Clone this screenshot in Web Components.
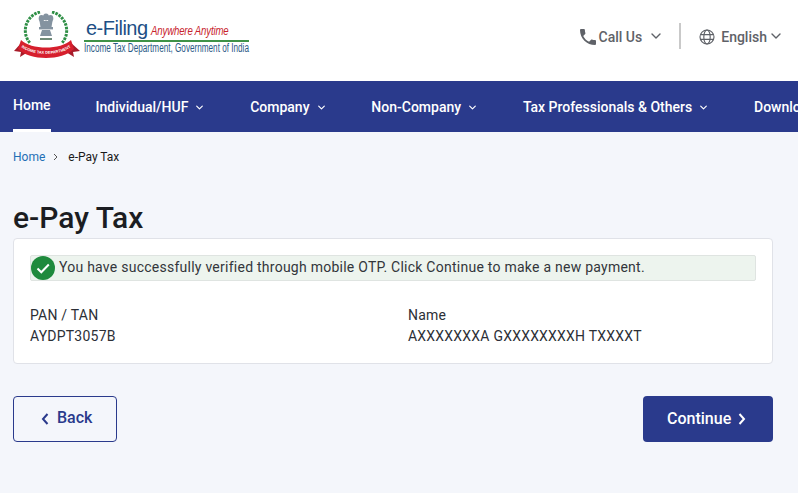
<!DOCTYPE html>
<html lang="en">
<head>
  <meta charset="UTF-8">
  <title>e-Pay Tax</title>
  <style>
    html, body {
      margin: 0;
      height: 100%;
      overflow: hidden;
      background: #f4f6fb;
      font-family: Roboto, "Liberation Sans", sans-serif;
    }
  </style>
</head>
<body>
  <app-header></app-header>
  <main-nav>
    <nav-item active>Home</nav-item>
    <nav-item menu>Individual/HUF</nav-item>
    <nav-item menu>Company</nav-item>
    <nav-item menu>Non-Company</nav-item>
    <nav-item menu>Tax Professionals &amp; Others</nav-item>
    <nav-item>Downloads</nav-item>
  </main-nav>
  <bread-crumb current="e-Pay Tax">Home</bread-crumb>
  <page-title>e-Pay Tax</page-title>
  <pay-card>
    <success-alert>You have successfully verified through mobile OTP. Click Continue to make a new payment.</success-alert>
    <info-field label="PAN / TAN">AYDPT3057B</info-field>
    <info-field label="Name">AXXXXXXXA GXXXXXXXXH TXXXXT</info-field>
  </pay-card>
  <action-bar>
    <action-button kind="back">Back</action-button>
    <action-button kind="next">Continue</action-button>
  </action-bar>

<script type="module">
  const chevron = `<svg viewBox="0 0 10 6" fill="none" stroke="currentColor" stroke-linecap="round" stroke-linejoin="round"><path d="M1 1l4 4 4-4"/></svg>`;

  class efilingLogo extends HTMLElement {
    constructor() {
      super();
      this.attachShadow({mode: "open"});
      this.shadowRoot.innerHTML = `
        <style>
          :host {
            display: flex;
            align-items: flex-start;
            width: 236px;
            height: 48px;
          }
          svg {
            flex: none;
            width: 68px;
            height: 48px;
            margin-right: 3px;
          }
          .words {
            display: flex;
            flex-direction: column;
            padding-top: 6px;
          }
          .top {
            display: flex;
            align-items: baseline;
            height: 23px;
            white-space: nowrap;
            padding-left: 2px;
            font-family: "Liberation Sans", sans-serif;
          }
          .brand {
            font-size: 20px;
            letter-spacing: -0.5px;
            color: #1d4f85;
          }
          .tag {
            display: inline-block;
            font-size: 13px;
            font-style: italic;
            letter-spacing: -0.2px;
            color: #c8232c;
            margin-left: 3px;
            transform: scaleX(0.74);
            transform-origin: left;
          }
          .rule {
            height: 2px;
            width: 165px;
            background: #3f9247;
          }
          .dept {
            margin-top: -1px;
            line-height: 14px;
            white-space: nowrap;
            font-family: "Liberation Sans", sans-serif;
            font-size: 12px;
            color: #2b5a86;
            transform: scaleX(0.68);
            transform-origin: left;
          }
        </style>
        <svg viewBox="0 0 68 48">
          <g fill="none" stroke="#2f8f46" stroke-width="3" stroke-dasharray="2.6 1">
            <path d="M27 1A19 19 0 0 0 17 32"/>
            <path d="M39 1A19 19 0 0 1 49 32"/>
          </g>
          <g fill="#8493a0">
            <ellipse cx="33" cy="6" rx="3" ry="3.600"/>
            <ellipse cx="28.500" cy="7.500" rx="2.800" ry="3.400"/>
            <ellipse cx="37.500" cy="7.500" rx="2.800" ry="3.400"/>
            <path d="M26.500 10h13l-1 6h-11z"/>
            <rect x="26" y="16" width="14" height="2.400"/>
            <path d="M29 19h8l2 6H27z"/>
          </g>
          <rect x="27" y="27" width="12" height="2" fill="#6f8a78"/>
          <path d="M9 31L1 40l7 1-1 5 8-5z" fill="#a81c2a"/>
          <path d="M57 31l10 9-7 1 1 5-8-5z" fill="#a81c2a"/>
          <path d="M8 29c10 10 40 10 50 0l3 9c-12 12-44 12-56 0z" fill="#d61f2d"/>
          <path id="ribbon" d="M7 35C17 45.500 49 45.500 59 35" fill="none"/>
          <text font-family="Liberation Sans, sans-serif" font-size="3.900" font-weight="700" fill="#fff">
            <textPath href="#ribbon" startOffset="50%" text-anchor="middle">INCOME TAX DEPARTMENT</textPath>
          </text>
        </svg>
        <div class="words">
          <div class="top"><span class="brand">e-Filing</span><span class="tag">Anywhere Anytime</span></div>
          <div class="rule"></div>
          <div class="dept">Income Tax Department, Government of India</div>
        </div>
      `;
    }
  }

  class topAction extends HTMLElement {
    constructor() {
      super();
      this.attachShadow({mode: "open"});
      this.shadowRoot.innerHTML = `
        <style>
          :host {
            display: inline-flex;
            align-items: center;
            font-size: 14px;
            font-weight: 500;
            color: #5f6268;
          }
          ::slotted(svg) {
            width: 16px;
            height: 16px;
          }
          .chev {
            display: inline-flex;
            margin: -2px 0 0 var(--chev-gap, 9px);
            width: 10px;
            height: 6px;
            stroke-width: 1.400;
          }
        </style>
        <slot name="icon"></slot>
        <slot></slot>
        <span class="chev">${chevron}</span>
      `;
    }
  }

  class appHeader extends HTMLElement {
    constructor() {
      super();
      this.attachShadow({mode: "open"});
      this.shadowRoot.innerHTML = `
        <style>
          :host {
            display: flex;
            justify-content: space-between;
            align-items: center;
            height: 81px;
            box-sizing: border-box;
            padding: 0 17px 0 13px;
            background: #fff;
          }
          efiling-logo {
            margin-top: -11px;
          }
          .right {
            display: flex;
            align-items: center;
            margin-top: -8px;
          }
          .divider {
            width: 2px;
            height: 26px;
            margin: -2px 18px 0 18px;
            background: #c9c9c9;
          }
          .phone {
            margin-right: 3px;
          }
          .lang {
            --chev-gap: 4px;
          }
          .globe {
            margin-right: 6px;
          }
        </style>
        <efiling-logo></efiling-logo>
        <div class="right">
          <top-action>
            <svg class="phone" slot="icon" viewBox="3 3 18 18" fill="#5f6268"><path d="M6.620 10.790c1.440 2.830 3.760 5.140 6.590 6.590l2.200-2.200c.27-.27.67-.36 1.020-.24 1.120.37 2.330.57 3.570.57.55 0 1 .45 1 1V20c0 .55-.45 1-1 1-9.390 0-17-7.610-17-17 0-.55.45-1 1-1h3.500c.55 0 1 .45 1 1 0 1.250.2 2.450.57 3.570.11.35.03.74-.25 1.020l-2.200 2.200z"/></svg>
            Call Us
          </top-action>
          <div class="divider"></div>
          <top-action class="lang">
            <svg class="globe" slot="icon" viewBox="0 0 24 24" fill="none" stroke="#5f6268" stroke-width="1.700"><circle cx="12" cy="12" r="10.500"/><ellipse cx="12" cy="12" rx="4.800" ry="10.500"/><path d="M2.500 8.500h19M2.500 15.500h19"/></svg>
            English
          </top-action>
        </div>
      `;
    }
  }

  class mainNav extends HTMLElement {
    constructor() {
      super();
      this.attachShadow({mode: "open"});
      this.shadowRoot.innerHTML = `
        <style>
          :host {
            display: flex;
            gap: 46.8px;
            height: 51px;
            padding-left: 13px;
            overflow: hidden;
            background: #2a3a8c;
          }
        </style>
        <slot></slot>
      `;
    }
  }

  class navItem extends HTMLElement {
    constructor() {
      super();
      this.attachShadow({mode: "open"});
      const arrow = this.hasAttribute("menu") ? `<span class="chev">${chevron}</span>` : "";
      this.shadowRoot.innerHTML = `
        <style>
          :host {
            display: flex;
            flex: none;
            align-items: center;
            box-sizing: border-box;
            height: 51px;
            padding-top: 1px;
            font-size: 14px;
            font-weight: 500;
            white-space: nowrap;
            color: #fff;
          }
          :host([active]) {
            padding-top: 0;
            padding-bottom: 1px;
            margin-right: -1.800px;
            border-bottom: 3px solid #fff;
          }
          .chev {
            display: inline-flex;
            width: 7px;
            height: 5px;
            margin: 1px 0 0 8px;
            stroke-width: 1.700;
          }
        </style>
        <slot></slot>${arrow}
      `;
    }
  }

  class breadCrumb extends HTMLElement {
    constructor() {
      super();
      this.attachShadow({mode: "open"});
      this.shadowRoot.innerHTML = `
        <style>
          :host {
            display: flex;
            align-items: center;
            height: 50px;
            padding-left: 13px;
            font-size: 12px;
            color: #1a1a1a;
          }
          .home {
            color: #1f6fb5;
          }
          svg {
            width: 5px;
            height: 8px;
            margin: 0 10px 0 8px;
          }
        </style>
        <span class="home"><slot></slot></span>
        <svg viewBox="0 0 5 8" fill="none" stroke="#555" stroke-width="1"><path d="M1 1l3 3-3 3"/></svg>
        <span>${this.getAttribute("current")}</span>
      `;
    }
  }

  class pageTitle extends HTMLElement {
    constructor() {
      super();
      this.attachShadow({mode: "open"});
      this.shadowRoot.innerHTML = `
        <style>
          :host {
            display: block;
            height: 56px;
            padding: 16px 0 0 13px;
            box-sizing: border-box;
            font-size: 30px;
            line-height: 40px;
            font-weight: 500;
            color: #1b1d22;
          }
        </style>
        <slot></slot>
      `;
    }
  }

  class payCard extends HTMLElement {
    constructor() {
      super();
      this.attachShadow({mode: "open"});
      this.shadowRoot.innerHTML = `
        <style>
          :host {
            display: grid;
            grid-template-columns: 378px 1fr;
            grid-template-rows: 26px auto;
            row-gap: 24px;
            box-sizing: border-box;
            width: 760px;
            height: 126px;
            margin-left: 13px;
            padding: 16px 16px 0 16px;
            background: #fff;
            border: 1px solid #e0e2e8;
            border-radius: 4px;
          }
          ::slotted(success-alert) {
            grid-column: 1 / -1;
          }
        </style>
        <slot></slot>
      `;
    }
  }

  class successAlert extends HTMLElement {
    constructor() {
      super();
      this.attachShadow({mode: "open"});
      this.shadowRoot.innerHTML = `
        <style>
          :host {
            display: flex;
            align-items: center;
            height: 26px;
            box-sizing: border-box;
            background: #edf4ee;
            border: 1px solid #dfe4e1;
            border-radius: 2px;
            font-size: 14px;
            letter-spacing: 0.25px;
            white-space: nowrap;
            color: #33363b;
          }
          svg {
            flex: none;
            width: 24px;
            height: 24px;
            margin: 0 4px 0 0;
          }
          span {
            margin-top: -2px;
          }
        </style>
        <svg viewBox="0 0 24 24"><circle cx="12" cy="12" r="12" fill="#1f8a3d"/><path d="M6.500 12.500l3.800 3.800 7.500-7.800" fill="none" stroke="#fff" stroke-width="2"/></svg>
        <span><slot></slot></span>
      `;
    }
  }

  class infoField extends HTMLElement {
    constructor() {
      super();
      this.attachShadow({mode: "open"});
      this.shadowRoot.innerHTML = `
        <style>
          :host {
            display: block;
            font-size: 14px;
            line-height: 21px;
            letter-spacing: 0.22px;
            color: #2c2f36;
          }
        </style>
        <div>${this.getAttribute("label")}</div>
        <div><slot></slot></div>
      `;
    }
  }

  class actionBar extends HTMLElement {
    constructor() {
      super();
      this.attachShadow({mode: "open"});
      this.shadowRoot.innerHTML = `
        <style>
          :host {
            display: flex;
            justify-content: space-between;
            width: 760px;
            margin: 32px 0 0 13px;
          }
        </style>
        <slot></slot>
      `;
    }
  }

  class actionButton extends HTMLElement {
    constructor() {
      super();
      this.attachShadow({mode: "open"});
      const isBack = this.getAttribute("kind") === "back";
      const left = `<svg viewBox="0 0 7 12" fill="none" stroke="currentColor" stroke-width="2"><path d="M6 1L1.500 6 6 11"/></svg>`;
      const right = `<svg viewBox="0 0 7 12" fill="none" stroke="currentColor" stroke-width="2"><path d="M1 1l4.500 5L1 11"/></svg>`;
      this.shadowRoot.innerHTML = `
        <style>
          :host {
            display: inline-flex;
            align-items: center;
            box-sizing: border-box;
            height: 46px;
            border-radius: 4px;
            font-size: 16px;
            font-weight: 500;
          }
          :host([kind="back"]) {
            width: 104px;
            padding: 0 0 3px 27px;
            gap: 8px;
            background: transparent;
            border: 1px solid #2a3a8c;
            color: #2a3a8c;
          }
          :host([kind="next"]) {
            width: 130px;
            padding: 0 0 2px 24px;
            gap: 7px;
            background: #2a3a8c;
            color: #fff;
          }
          svg {
            width: 8px;
            height: 12px;
            margin-top: 2px;
          }
        </style>
        ${isBack ? left : ""}<slot></slot>${isBack ? "" : right}
      `;
    }
  }

  customElements.define("efiling-logo", efilingLogo);
  customElements.define("top-action", topAction);
  customElements.define("app-header", appHeader);
  customElements.define("main-nav", mainNav);
  customElements.define("nav-item", navItem);
  customElements.define("bread-crumb", breadCrumb);
  customElements.define("page-title", pageTitle);
  customElements.define("pay-card", payCard);
  customElements.define("success-alert", successAlert);
  customElements.define("info-field", infoField);
  customElements.define("action-bar", actionBar);
  customElements.define("action-button", actionButton);
</script>
</body>
</html>
